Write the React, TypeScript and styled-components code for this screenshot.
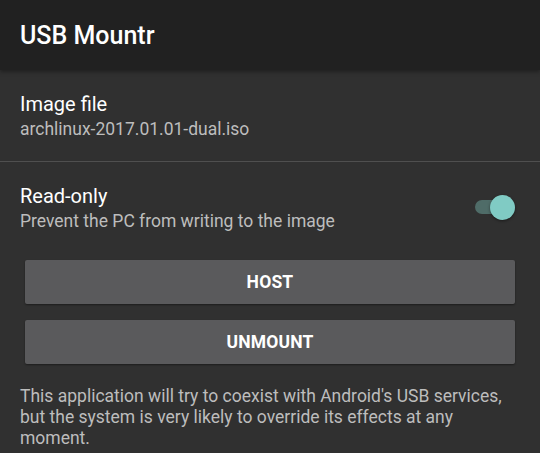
import styled, { createGlobalStyle } from "styled-components";

const GlobalStyle = createGlobalStyle`
  html, body {
    margin: 0;
    padding: 0;
    background: #303030;
  }
  body {
    font-family: Roboto, "Noto Sans", "Liberation Sans", sans-serif;
  }
`;

const Screen = styled.div`
  width: 540px;
  height: 453px;
  background: #303030;
  overflow: hidden;
  display: flex;
  flex-direction: column;
`;

const AppBar = styled.header`
  height: 70px;
  flex-shrink: 0;
  background: #212121;
  display: flex;
  align-items: center;
  padding-left: 20px;
  box-shadow: 0 2px 4px rgba(0, 0, 0, 0.35);
  position: relative;
  z-index: 1;

  h1 {
    margin: 0;
    color: #fff;
    font-size: 25px;
    font-weight: 500;
  }
`;

const Section = styled.section<{ $divider?: boolean }>`
  display: flex;
  align-items: center;
  justify-content: space-between;
  padding: 21px 20px 20px;
  border-bottom: ${({ $divider }) => ($divider ? "1px solid #4f4f4f" : "none")};
`;

const Texts = styled.div`
  display: flex;
  flex-direction: column;
`;

const Title = styled.div`
  color: #ffffff;
  font-size: 20px;
  line-height: 26px;
`;

const Subtitle = styled.div`
  color: #bdbdbd;
  font-size: 17.5px;
  line-height: 24px;
`;

const Switch = styled.div`
  position: relative;
  width: 32px;
  height: 14px;
  margin-right: 13px;
  margin-top: -2px;
  border-radius: 7px;
  background: #4f6c68;

  &::after {
    content: "";
    position: absolute;
    right: -8px;
    top: -5.5px;
    width: 25px;
    height: 25px;
    border-radius: 50%;
    background: #80cbc4;
    box-shadow: 0 1px 3px rgba(0, 0, 0, 0.45);
  }
`;

const Buttons = styled.div`
  display: flex;
  flex-direction: column;
  gap: 16px;
  padding: 7px 25px 0;
`;

const Button = styled.button`
  height: 44px;
  border: none;
  border-radius: 2px;
  background: #5a5a5c;
  color: #ffffff;
  font-family: Roboto, sans-serif;
  font-size: 17.5px;
  font-weight: 700;
  letter-spacing: 0.2px;
  box-shadow: 0 1px 2px rgba(0, 0, 0, 0.4);
`;

const Note = styled.p`
  margin: 22px 20px 0;
  color: #bdbdbd;
  font-size: 17.5px;
  line-height: 21px;
`;

const App = () => {
  return (
    <Screen>
      <GlobalStyle />
      <AppBar>
        <h1>USB Mountr</h1>
      </AppBar>
      <Section $divider>
        <Texts>
          <Title>Image file</Title>
          <Subtitle>archlinux-2017.01.01-dual.iso</Subtitle>
        </Texts>
      </Section>
      <Section>
        <Texts>
          <Title>Read-only</Title>
          <Subtitle>Prevent the PC from writing to the image</Subtitle>
        </Texts>
        <Switch />
      </Section>
      <Buttons>
        <Button>HOST</Button>
        <Button>UNMOUNT</Button>
      </Buttons>
      <Note>
        This application will try to coexist with Android's USB services, but
        the system is very likely to override its effects at any moment.
      </Note>
    </Screen>
  );
};

export default App;
